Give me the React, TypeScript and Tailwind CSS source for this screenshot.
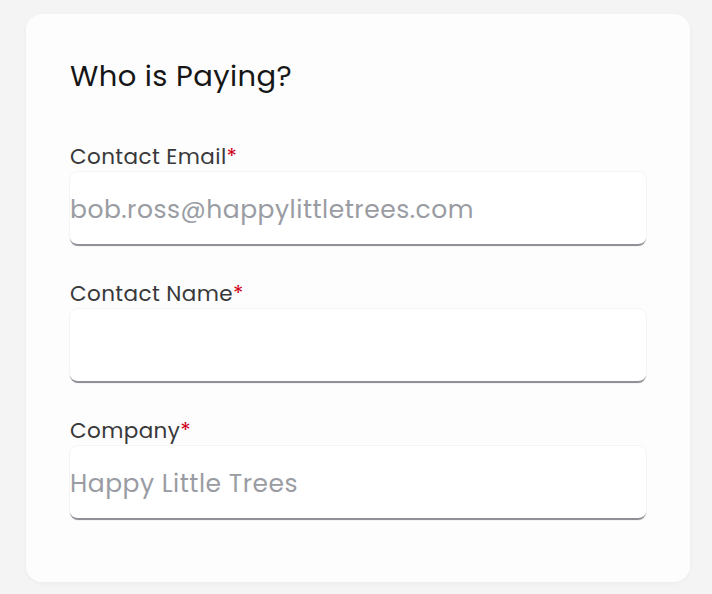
import React from "react";

const font = { fontFamily: '"Poppins", "Open Sans", "Noto Sans", sans-serif' };

function Field({ label, placeholder }: { label: string; placeholder: string }) {
  return (
    <div className="flex flex-col">
      <label className="text-[21.5px] leading-[26px] text-[#38383a] tracking-[0.4px] mb-[2px]">
        {label}
        <span className="text-[#d0021b]">*</span>
      </label>
      <input
        placeholder={placeholder}
        className="h-[74px] w-full rounded-[8px] bg-white border-0 border-b-2 border-b-[#8f9196] shadow-[0_0_0_1px_#f4f4f4] px-0 pt-[3px] text-[25px] text-[#333] placeholder:text-[#9a9ca3] outline-none tracking-[0.5px]"
        style={font}
      />
    </div>
  );
}

export default function App() {
  return (
    <div className="min-h-[594px] bg-[#f4f4f4] pt-[14px] pl-[26px] pr-[22px] pb-[12px]" style={font}>
      <div className="h-[568px] rounded-[16px] bg-[#fdfdfd] shadow-[0_1px_4px_rgba(0,0,0,0.04)] px-[44px] pt-[46px]">
        <h1 className="text-[29px] leading-[32px] text-[#161616] tracking-[0.4px]">Who is Paying?</h1>
        <div className="mt-[52px] flex flex-col gap-[35px]">
          <Field label="Contact Email" placeholder="bob.ross@happylittletrees.com" />
          <Field label="Contact Name" placeholder="" />
          <Field label="Company" placeholder="Happy Little Trees" />
        </div>
      </div>
    </div>
  );
}
